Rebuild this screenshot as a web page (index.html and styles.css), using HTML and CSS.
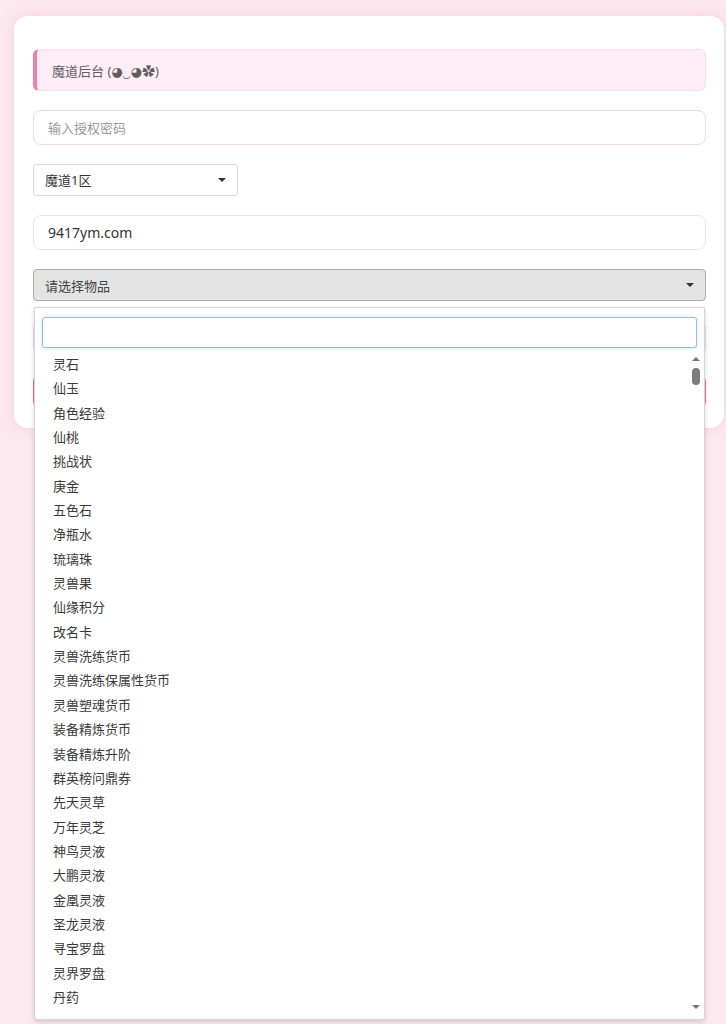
FILE: index.html
```html
<!DOCTYPE html>
<html lang="zh-CN">
  <head>
    <meta charset="UTF-8" />
    <title>魔道后台</title>
    <link rel="stylesheet" href="styles.css">
  </head>

  <body>
    <main class="kort">
      <div class="hilsen">魔道后台 (◕‿◕✿)</div>

      <input class="felt" type="password" placeholder="输入授权密码" />

      <div class="vaelg">
        <select class="omraade">
          <option>魔道1区</option>
        </select>
      </div>

      <input class="felt graa" type="text" value="9417ym.com" />

      <div class="vare">
        <div class="vare-valg">请选择物品</div>

        <div class="vare-liste">
          <div class="soeg"><input type="text" autofocus /></div>
          <ul>
            <li>灵石</li>
            <li>仙玉</li>
            <li>角色经验</li>
            <li>仙桃</li>
            <li>挑战状</li>
            <li>庚金</li>
            <li>五色石</li>
            <li>净瓶水</li>
            <li>琉璃珠</li>
            <li>灵兽果</li>
            <li>仙缘积分</li>
            <li>改名卡</li>
            <li>灵兽洗练货币</li>
            <li>灵兽洗练保属性货币</li>
            <li>灵兽塑魂货币</li>
            <li>装备精炼货币</li>
            <li>装备精炼升阶</li>
            <li>群英榜问鼎券</li>
            <li>先天灵草</li>
            <li>万年灵芝</li>
            <li>神鸟灵液</li>
            <li>大鹏灵液</li>
            <li>金凰灵液</li>
            <li>圣龙灵液</li>
            <li>寻宝罗盘</li>
            <li>灵界罗盘</li>
            <li>丹药</li>
          </ul>
          <div class="rulle">
            <span class="op"></span>
            <span class="greb"></span>
            <span class="ned"></span>
          </div>
        </div>
      </div>

      <input class="felt" type="text" placeholder="数量" />
      <button class="send">发送</button>
    </main>
  </body>
</html>
```

FILE: styles.css
```css
html {
  background-color: #fde8ef;
}

body {
  margin: 0;
  min-height: 1024px;
  box-sizing: border-box;
  padding: 16px 2px 0 14px;
  background-color: #fde8ef;
  font-family: "Noto Sans", "Noto Sans CJK SC", "DejaVu Sans", sans-serif;
  font-size: 13px;
  color: #333;
}

.kort {
  display: flex;
  flex-direction: column;
  gap: 19px;
  background: #fff;
  border-radius: 14px;
  padding: 33px 18px 19px 19px;
  box-shadow: 0 0 14px rgba(245, 160, 190, 0.35);
}

.hilsen {
  height: 42px;
  box-sizing: border-box;
  display: flex;
  align-items: center;
  padding-left: 15px;
  background-color: #fdedf5;
  border: 1px solid #f7dde8;
  border-left: 4px solid #ef7fa9;
  border-radius: 6px;
  color: #625c60;
}

.felt {
  height: 35px;
  box-sizing: border-box;
  padding: 0 14px;
  border: 1px solid #f3d7e1;
  border-radius: 8px;
  font-family: inherit;
  font-size: 13px;
  color: #333;
  outline: none;
}

.felt::placeholder {
  color: #9a9a9a;
}

.felt.graa {
  border-color: #e6e6e6;
  font-size: 14px;
}

.vaelg {
  position: relative;
  width: 205px;
}

.vaelg::after {
  content: "";
  position: absolute;
  right: 12px;
  top: 14px;
  border-left: 4px solid transparent;
  border-right: 4px solid transparent;
  border-top: 4px solid #333;
  pointer-events: none;
}

.omraade {
  appearance: none;
  width: 100%;
  height: 32px;
  padding: 0 11px;
  background: #fff;
  border: 1px solid #d9d9d9;
  border-radius: 3px;
  font-family: inherit;
  font-size: 13px;
  color: #333;
}

.vare {
  position: relative;
}

.vare-valg {
  height: 32px;
  box-sizing: border-box;
  display: flex;
  align-items: center;
  padding-left: 11px;
  background-color: #e4e4e4;
  border: 1px solid #aaa;
  border-radius: 4px;
  color: #444;
}

.vare-valg::after {
  content: "";
  position: absolute;
  right: 12px;
  top: 14px;
  border-left: 4px solid transparent;
  border-right: 4px solid transparent;
  border-top: 4px solid #333;
}

.vare-liste {
  position: absolute;
  z-index: 5;
  left: 1px;
  right: 1px;
  top: 38px;
  height: 713px;
  box-sizing: border-box;
  background: #fff;
  border: 1px solid #d4d4d4;
  border-radius: 0 0 3px 3px;
  box-shadow: 0 2px 5px rgba(0, 0, 0, 0.15);
  overflow: hidden;
}

.soeg {
  padding: 9px 7px 4px 7px;
}

.soeg input {
  width: 100%;
  height: 31px;
  box-sizing: border-box;
  border: 1px solid #9bbbd8;
  border-radius: 3px;
  box-shadow: 0 0 4px rgba(110, 180, 240, 0.35);
  outline: none;
  padding: 0 12px;
  font-family: inherit;
  font-size: 13px;
  caret-color: #333;
}

.vare-liste ul {
  list-style: none;
  margin: 0;
  padding: 0;
}

.vare-liste li {
  line-height: 24.35px;
  padding-left: 18px;
  color: #3a3a3a;
}

.rulle {
  position: absolute;
  right: 2px;
  top: 46px;
  bottom: 4px;
  width: 12px;
}

.rulle .op,
.rulle .ned {
  position: absolute;
  left: 2px;
  border-left: 4px solid transparent;
  border-right: 4px solid transparent;
}

.rulle .op {
  top: 3px;
  border-bottom: 4px solid #777;
}

.rulle .ned {
  bottom: 6px;
  border-top: 4px solid #777;
}

.rulle .greb {
  position: absolute;
  left: 2px;
  top: 14px;
  width: 8px;
  height: 17px;
  border-radius: 4px;
  background: #7d7d7d;
}

.send {
  height: 35px;
  border: none;
  border-radius: 8px;
  background-color: #ef6f8e;
  color: #fff;
  font-family: inherit;
  font-size: 14px;
}
```
